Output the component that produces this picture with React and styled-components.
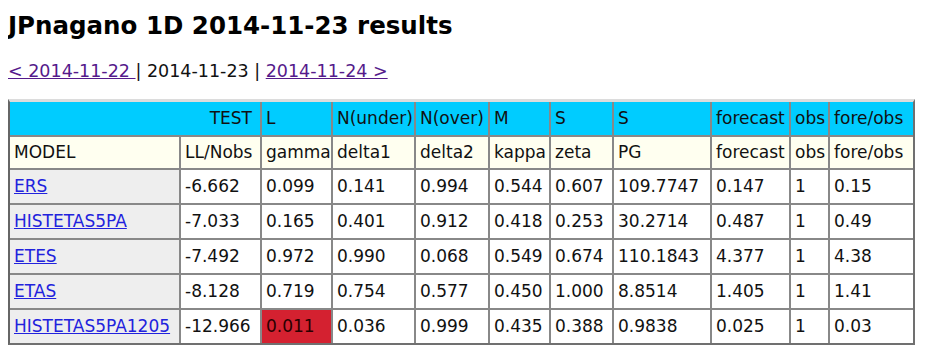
import React from "react";
import styled, { createGlobalStyle } from "styled-components";

const GlobalStyle = createGlobalStyle`
  body {
    margin: 8px;
    background: #ffffff;
    font-family: "DejaVu Sans", Verdana, sans-serif;
    color: #000000;
  }
`;

const columns = [171, 81, 71, 83, 74, 61, 63, 98, 79, 39, 83];

const testRow = ["L", "N(under)", "N(over)", "M", "S", "S", "forecast", "obs", "fore/obs"];
const modelRow = ["LL/Nobs", "gamma", "delta1", "delta2", "kappa", "zeta", "PG", "forecast", "obs", "fore/obs"];

const results = [
  { name: "ERS", values: ["-6.662", "0.099", "0.141", "0.994", "0.544", "0.607", "109.7747", "0.147", "1", "0.15"] },
  { name: "HISTETAS5PA", values: ["-7.033", "0.165", "0.401", "0.912", "0.418", "0.253", "30.2714", "0.487", "1", "0.49"] },
  { name: "ETES", values: ["-7.492", "0.972", "0.990", "0.068", "0.549", "0.674", "110.1843", "4.377", "1", "4.38"] },
  { name: "ETAS", values: ["-8.128", "0.719", "0.754", "0.577", "0.450", "1.000", "8.8514", "1.405", "1", "1.41"] },
  { name: "HISTETAS5PA1205", values: ["-12.966", "0.011", "0.036", "0.999", "0.435", "0.388", "0.9838", "0.025", "1", "0.03"], fail: [1] },
];

const App = () => {
  return (
    <>
      <GlobalStyle />
      <Title>JPnagano 1D 2014-11-23 results</Title>
      <DateNav>
        <VisitedLink href="#">&lt; 2014-11-22 </VisitedLink>| 2014-11-23 |{" "}
        <VisitedLink href="#">2014-11-24 &gt;</VisitedLink>
      </DateNav>

      <ResultTable>
        <colgroup>
          {columns.map((w, i) => (
            <Col key={i} $w={w} />
          ))}
        </colgroup>
        <thead>
          <tr>
            <HeadCell colSpan={2} $right>
              TEST
            </HeadCell>
            {testRow.map((t, i) => (
              <HeadCell key={i}>{t}</HeadCell>
            ))}
          </tr>
          <tr>
            <SubCell>MODEL</SubCell>
            {modelRow.map((t, i) => (
              <SubCell key={i}>{t}</SubCell>
            ))}
          </tr>
        </thead>
        <tbody>
          {results.map((row) => (
            <tr key={row.name}>
              <ModelCell>
                <ModelLink href="#">{row.name}</ModelLink>
              </ModelCell>
              {row.values.map((v, i) => (
                <Cell key={i} $fail={row.fail && row.fail.includes(i)}>
                  {v}
                </Cell>
              ))}
            </tr>
          ))}
        </tbody>
      </ResultTable>
    </>
  );
};

export default App;

const Title = styled.h1`
  margin: 0;
  padding-top: 3px;
  font-size: 24.5px;
  line-height: 30px;
  font-weight: bold;
`;

const DateNav = styled.div`
  margin-top: 19px;
  font-size: 17.5px;
  line-height: 22px;
  color: #111;
`;

const VisitedLink = styled.a`
  color: #551a8b;
  text-decoration: underline;
`;

const ResultTable = styled.table`
  margin-top: 17px;
  width: 904px;
  table-layout: fixed;
  border-collapse: separate;
  border-spacing: 0;
  border-top: 3px solid #dcdcdc;
  border-left: 2px solid #666;
  border-right: 2px solid #707070;
  border-bottom: 2px solid #707070;
  font-size: 17px;
  line-height: 21px;

  td {
    box-sizing: border-box;
    border-right: 2px solid #888;
    border-bottom: 2px solid #888;
    padding: 6px 4px;
    white-space: nowrap;
    overflow: hidden;
    vertical-align: middle;
  }
  tr td:last-child {
    border-right: none;
  }
  tbody tr:last-child td {
    border-bottom: none;
  }
`;

const Col = styled.col`
  width: ${(p) => p.$w}px;
`;

const HeadCell = styled.td`
  background: #00ccff;
  color: #111;
  text-align: ${(p) => (p.$right ? "right" : "left")};
  padding-right: ${(p) => (p.$right ? "8px" : "4px")} !important;
`;

const SubCell = styled.td`
  background: #fffff0;
  color: #111;
  padding-top: 5px !important;
  padding-bottom: 5px !important;
`;

const ModelCell = styled.td`
  background: #eeeeee;
`;

const ModelLink = styled.a`
  color: #2222dd;
  text-decoration: underline;
`;

const Cell = styled.td`
  background: ${(p) => (p.$fail ? "#d42130" : "#ffffff")};
  color: ${(p) => (p.$fail ? "#2a0000" : "#111")};
`;
